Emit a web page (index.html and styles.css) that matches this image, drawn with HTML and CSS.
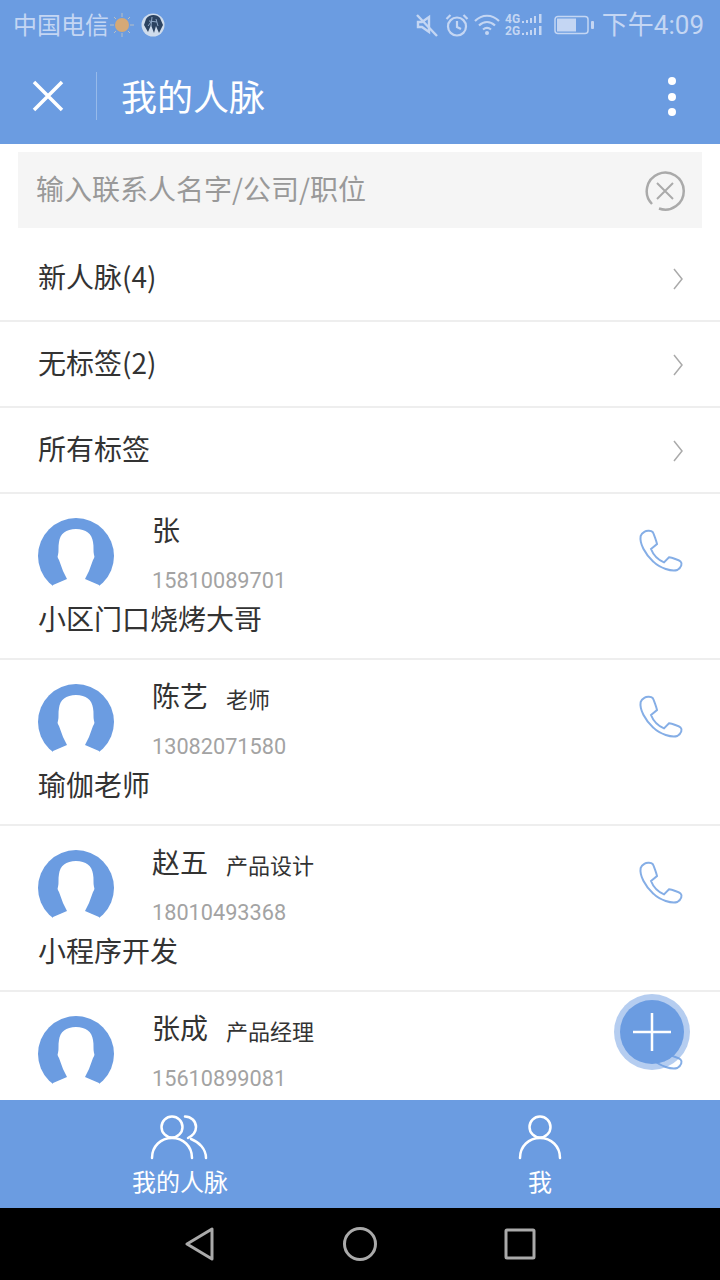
FILE: index.html
```html
<!DOCTYPE html>
<html lang="zh-CN">
<head>
    <meta charset="UTF-8">
    <meta name="viewport" content="width=device-width, initial-scale=1.0">
    <title>我的人脉</title>
    <link rel="stylesheet" href="styles.css">
</head>
<body>
    <div class="app">
        <div class="status-bar">
            <span class="carrier">中国电信</span>
            <svg class="sun" width="24" height="24" viewBox="0 0 24 24">
                <g stroke="#b9bfc4" stroke-width="1"><path d="M12 0v4M12 20v4M0 12h4M20 12h4M4 4l2 2M18 18l2 2M4 20l2-2M18 6l2-2"/></g>
                <circle cx="12" cy="12" r="7" fill="#d5a977"/>
            </svg>
            <svg class="globe" width="24" height="24" viewBox="0 0 24 24">
                <circle cx="12" cy="12" r="11.500" fill="#cfdcec"/>
                <path d="M5 6C8 1 16 1 19 5L22 12 18 20 15 13 13 20 10 12 7 19 3 12Z" fill="#2c4360"/>
                <path d="M8 8l8 1M7 13l3-4M15 6l2 7M11 4l-1 9" stroke="#8ea6c4" stroke-width="1" fill="none"/>
            </svg>
            <div class="status-right">
                <svg class="mute" width="24" height="24" viewBox="0 0 24 24" fill="none" stroke="#c4d6f3" stroke-width="2.400">
                    <path d="M3 9h4l7-5v15l-7-5H3z"/>
                    <path d="M2 2l20 21"/>
                </svg>
                <svg width="24" height="24" viewBox="0 0 24 24" fill="none" stroke="#c4d6f3" stroke-width="2.200">
                    <circle cx="12" cy="13.500" r="9"/>
                    <path d="M12 8v6l4 2M1.500 6l4-4M22.500 6l-4-4"/>
                </svg>
                <svg width="26" height="24" viewBox="0 0 26 24" fill="none" stroke="#c4d6f3" stroke-width="2.200">
                    <path d="M1 8c7-7 17-7 24 0M5 12.500c5-4.500 11-4.500 16 0M9 16.500c2.500-2 5.500-2 8 0"/>
                    <circle cx="13" cy="20" r="2" fill="#c4d6f3" stroke="none"/>
                </svg>
                <svg class="signal" width="40" height="24" viewBox="0 0 40 24" fill="#c4d6f3">
                    <text x="0" y="10" class="signal-text">4G</text>
                    <text x="0" y="22" class="signal-text">2G</text>
                    <path d="M17 8h2v2h-2zM21 7h2v3h-2zM25 5h2v5h-2zM29 3h2v7h-2zM34 1h2.500v9H34z"/>
                    <path d="M17 20h2v2h-2zM21 19h2v3h-2zM25 17h2v5h-2zM29 15h2v7h-2zM34 13h2.500v9H34z"/>
                </svg>
                <svg class="battery" width="40" height="24" viewBox="0 0 40 24">
                    <rect x="1" y="3.500" width="33" height="17" rx="3" fill="none" stroke="#c4d6f3" stroke-width="1.500"/>
                    <rect x="3" y="5.500" width="19" height="13" fill="#c4d6f3"/>
                    <rect x="37" y="8" width="3" height="8" rx="1" fill="#c4d6f3"/>
                </svg>
                <span class="time">下午4:09</span>
            </div>
        </div>

        <div class="header">
            <svg class="close-icon" width="32" height="32" viewBox="0 0 32 32" stroke="#fff" stroke-width="3.500">
                <path d="M2 2l28 28M30 2L2 30"/>
            </svg>
            <div class="divider"></div>
            <div class="title">我的人脉</div>
            <div class="more"><i></i><i></i><i></i></div>
        </div>

        <div class="main">
            <div class="search">
                <span class="placeholder">输入联系人名字/公司/职位</span>
                <svg class="clear" width="40" height="40" viewBox="0 0 40 40" fill="none" stroke="#aaa" stroke-width="2.500">
                    <path d="M7 33A18.500 18.500 0 1 1 14 37.500"/>
                    <path d="M12 12l16 16M28 12L12 28" stroke-width="2"/>
                </svg>
            </div>

            <div class="row"><span>新人脉(4)</span><svg class="chevron" width="10" height="22" viewBox="0 0 10 22"><path d="M1 1l8 10-8 10"/></svg></div>
            <div class="row"><span>无标签(2)</span><svg class="chevron" width="10" height="22" viewBox="0 0 10 22"><path d="M1 1l8 10-8 10"/></svg></div>
            <div class="row"><span>所有标签</span><svg class="chevron" width="10" height="22" viewBox="0 0 10 22"><path d="M1 1l8 10-8 10"/></svg></div>

            <div class="contact">
                <div class="contact-top">
                    <svg class="avatar" width="76" height="76" viewBox="0 0 76 76"><use href="#avatar-shape"/></svg>
                    <div class="info">
                        <div class="name">张</div>
                        <div class="tel">15810089701</div>
                    </div>
                    <svg class="phone" width="44" height="44" viewBox="0 0 132 132"><use href="#phone-shape"/></svg>
                </div>
                <div class="desc">小区门口烧烤大哥</div>
            </div>
            <div class="contact">
                <div class="contact-top">
                    <svg class="avatar" width="76" height="76" viewBox="0 0 76 76"><use href="#avatar-shape"/></svg>
                    <div class="info">
                        <div class="name">陈艺<span class="role">老师</span></div>
                        <div class="tel">13082071580</div>
                    </div>
                    <svg class="phone" width="44" height="44" viewBox="0 0 132 132"><use href="#phone-shape"/></svg>
                </div>
                <div class="desc">瑜伽老师</div>
            </div>
            <div class="contact">
                <div class="contact-top">
                    <svg class="avatar" width="76" height="76" viewBox="0 0 76 76"><use href="#avatar-shape"/></svg>
                    <div class="info">
                        <div class="name">赵五<span class="role">产品设计</span></div>
                        <div class="tel">18010493368</div>
                    </div>
                    <svg class="phone" width="44" height="44" viewBox="0 0 132 132"><use href="#phone-shape"/></svg>
                </div>
                <div class="desc">小程序开发</div>
            </div>
            <div class="contact">
                <div class="contact-top">
                    <svg class="avatar" width="76" height="76" viewBox="0 0 76 76"><use href="#avatar-shape"/></svg>
                    <div class="info">
                        <div class="name">张成<span class="role">产品经理</span></div>
                        <div class="tel">15610899081</div>
                    </div>
                    <svg class="phone" width="44" height="44" viewBox="0 0 132 132"><use href="#phone-shape"/></svg>
                </div>
            </div>
        </div>

        <div class="fab">
            <svg width="40" height="40" viewBox="0 0 40 40" stroke="#fff" stroke-width="2.500"><path d="M1 20h38M20 1v38"/></svg>
        </div>

        <div class="tabbar">
            <div class="tab">
                <svg width="60" height="48" viewBox="0 0 60 48" fill="none" stroke="#fff" stroke-width="2.500" stroke-linecap="round">
                    <circle cx="22" cy="14" r="10.500"/>
                    <path d="M2 45C2 33 11 25 22 25s20 8 20 20"/>
                    <path d="M35 3.500c6 0 11 4.500 11 10.500S42 23 38 25"/>
                    <path d="M41 26c8 3 15 10 15 19"/>
                </svg>
                <span>我的人脉</span>
            </div>
            <div class="tab">
                <svg width="60" height="48" viewBox="0 0 60 48" fill="none" stroke="#fff" stroke-width="2.500" stroke-linecap="round">
                    <circle cx="30" cy="14" r="10.500"/>
                    <path d="M10 45C10 33 19 25 30 25s20 8 20 20"/>
                </svg>
                <span>我</span>
            </div>
        </div>

        <div class="navbar">
            <svg width="30" height="36" viewBox="0 0 30 36" fill="none" stroke="#aaa" stroke-width="3" stroke-linejoin="round"><path d="M27 3v30L2 18z"/></svg>
            <svg width="36" height="36" viewBox="0 0 36 36" fill="none" stroke="#aaa" stroke-width="3"><circle cx="18" cy="18" r="15.500"/></svg>
            <svg width="32" height="32" viewBox="0 0 32 32" fill="none" stroke="#aaa" stroke-width="3" stroke-linejoin="round"><rect x="2" y="2" width="28" height="28" rx="1"/></svg>
        </div>
    </div>

    <svg class="defs" width="0" height="0">
        <defs>
            <g id="avatar-shape">
                <circle cx="38" cy="38" r="38" fill="#6b9ce1"/>
                <path d="M38 11C28 11 22 16 21 24c-1 5 0 9-1 13-1 2 0 3 1 5l4 11 4 8L15 67v9h46v-9L47 61l4-8 4-11c1-2 2-3 1-5-1-4 0-8-1-13C54 16 48 11 38 11z" fill="#fff"/>
            </g>
            <path id="phone-shape" d="M14 5C20 1 34 2 38 6c3 4 12 30 13 36L33 57c7 18 22 33 39 40l15-15c8 1 31 8 35 13 5 5 3 17-10 25-17 5-52-5-72-25C15 72-2 40 2 18 3 12 9 8 14 5z" fill="none" stroke="#85aee6" stroke-width="6"/>
        </defs>
    </svg>
</body>
</html>
```

FILE: styles.css
```css
* {
    box-sizing: border-box;
}

body {
    margin: 0;
    background-color: #fff;
    font-family: "Noto Sans CJK SC", "Noto Sans", sans-serif;
    color: #333;
}

.app {
    position: relative;
    display: flex;
    flex-direction: column;
    width: 720px;
    height: 1280px;
    overflow: hidden;
}

.defs {
    position: absolute;
}

.status-bar {
    display: flex;
    align-items: center;
    height: 50px;
    padding: 0 16px 0 13px;
    background-color: #6b9ce1;
    color: #c4d6f3;
}

.carrier {
    margin-bottom: 2px;
    font-size: 24px;
    line-height: 48px;
}

.sun {
    margin-left: 1px;
}

.globe {
    margin-left: 7px;
}

.status-right {
    display: flex;
    align-items: center;
    gap: 5px;
    margin-left: auto;
}

.mute {
    margin-left: -2px;
    margin-right: 1px;
}

.battery {
    margin-left: 4px;
}

.signal-text {
    font-family: "Roboto", sans-serif;
    font-size: 12px;
    font-weight: 700;
}

.time {
    margin-left: 3px;
    font-family: "Roboto", "Noto Sans CJK SC", sans-serif;
    font-size: 26px;
    line-height: 50px;
}

.header {
    display: flex;
    align-items: center;
    height: 94px;
    padding-left: 32px;
    background-color: #6b9ce1;
    color: #fff;
}

.close-icon {
    margin-bottom: 2px;
}

.divider {
    width: 1px;
    height: 48px;
    margin-left: 32px;
    margin-bottom: 2px;
    background-color: rgba(255,255,255,0.3);
}

.title {
    margin-left: 24px;
    margin-bottom: 4px;
    font-size: 36px;
}

.more {
    display: flex;
    flex-direction: column;
    gap: 7.500px;
    margin-left: auto;
    margin-right: 44px;
    margin-bottom: 1px;
}

.more i {
    width: 8px;
    height: 8px;
    border-radius: 50%;
    background-color: #fff;
}

.main {
    flex: 1;
    min-height: 0;
    overflow: hidden;
}

.search {
    display: flex;
    align-items: center;
    justify-content: space-between;
    height: 76px;
    margin: 8px 18px;
    padding: 0 17px 0 18px;
    background-color: #f5f5f5;
}

.placeholder {
    margin-bottom: 4px;
    font-size: 28px;
    color: #999;
}

.clear {
    margin-top: 2px;
}

.row {
    display: flex;
    align-items: center;
    justify-content: space-between;
    height: 86px;
    padding: 0 38px;
    border-bottom: 2px solid #eee;
    font-size: 28px;
}

.row span {
    margin-bottom: 4px;
}

.chevron {
    margin-top: 2px;
    margin-right: -1px;
    fill: none;
    stroke: #aaa;
    stroke-width: 1.500;
}

.contact {
    height: 166px;
    padding: 24px 38px 18px;
    border-bottom: 2px solid #eee;
}

.contact-top {
    display: flex;
    align-items: flex-start;
}

.avatar {
    flex-shrink: 0;
}

.info {
    flex: 1;
    margin-left: 38px;
}

.name {
    display: flex;
    align-items: center;
    height: 22px;
    font-size: 28px;
}

.role {
    margin-left: 18px;
    margin-top: 6px;
    font-size: 22px;
}

.tel {
    margin-top: 28px;
    font-family: "Roboto", sans-serif;
    font-size: 21.700px;
    line-height: 26px;
    color: #a3a3a3;
}

.phone {
    margin-top: 12px;
    margin-right: -2px;
    overflow: visible;
}

.desc {
    margin-top: 4px;
    font-size: 28px;
    line-height: 40px;
}

.fab {
    position: absolute;
    left: 620px;
    top: 1000px;
    display: flex;
    align-items: center;
    justify-content: center;
    width: 64px;
    height: 64px;
    border-radius: 50%;
    background-color: #6b9ce1;
    box-shadow: 0 0 0 6px rgba(107,156,225,0.5);
}

.tabbar {
    display: grid;
    grid-template-columns: 1fr 1fr;
    height: 108px;
    background-color: #6b9ce1;
    color: #fff;
}

.tab {
    display: flex;
    flex-direction: column;
    align-items: center;
    padding-top: 13px;
    font-size: 24px;
    line-height: 34px;
}

.tab svg {
    margin-bottom: 3px;
}

.navbar {
    display: grid;
    grid-template-columns: repeat(3, 160px);
    justify-content: center;
    justify-items: center;
    align-items: center;
    height: 72px;
    background-color: #000;
}
```
